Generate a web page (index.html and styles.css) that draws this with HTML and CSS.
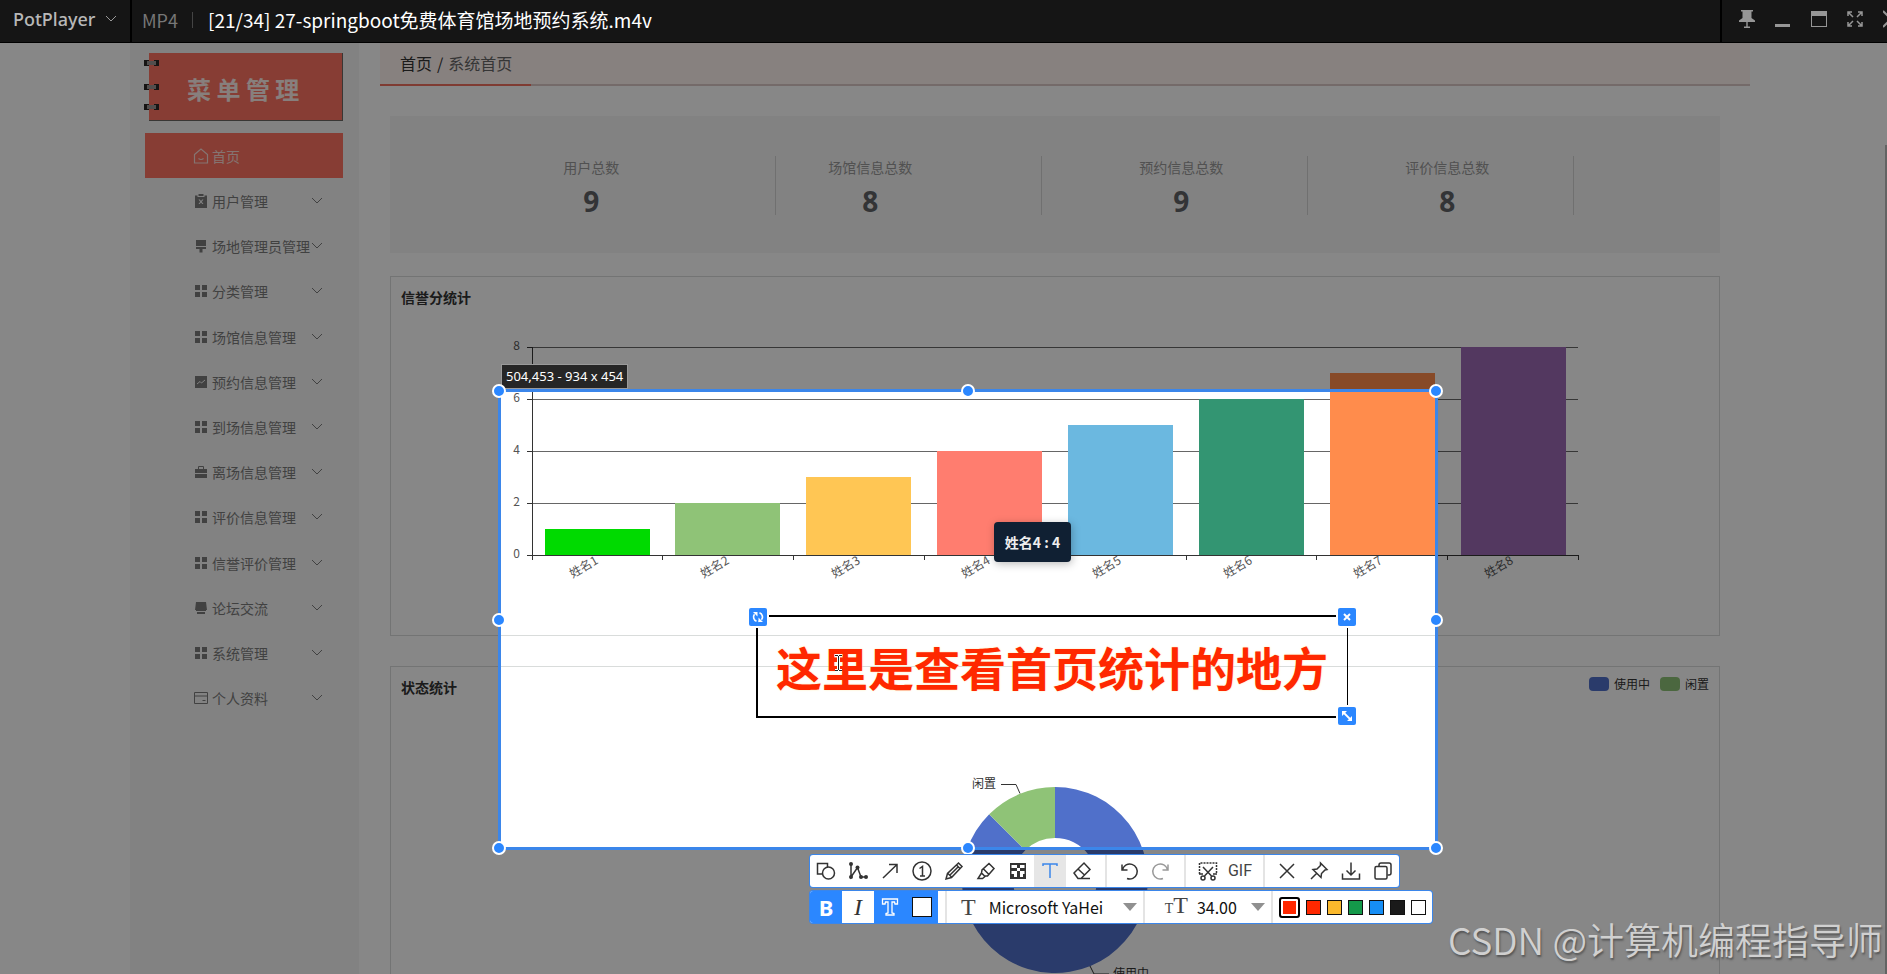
FILE: index.html
```html
<!DOCTYPE html>
<html lang="zh-CN">
<head>
<meta charset="utf-8">
<title>首页统计</title>
<link rel="stylesheet" href="styles.css">
</head>
<body>
<svg class="defs" aria-hidden="true">
  <symbol id="i-grid" viewBox="0 0 16 16"><path fill="currentColor" d="M2 2h5v5H2zM9 2h5v5H9zM2 9h5v5H2zM9 9h5v5H9z"/></symbol>
  <symbol id="i-down" viewBox="0 0 12 8"><path fill="none" stroke="currentColor" d="M1 1l5 5 5-5"/></symbol>
  <symbol id="i-home" viewBox="0 0 16 16"><path fill="none" stroke="currentColor" stroke-width="1.2" d="M1.5 6.5L8 1l6.500 5.500V15h-13zM5.500 10.500q2.500 2 5 0"/></symbol>
  <symbol id="i-user" viewBox="0 0 16 16"><path fill="currentColor" fill-rule="evenodd" d="M2 2.500h2.500V4h7V2.500H14V15H2zM5.500 6.500L7.200 8.700 5.500 11h1.300L8 9.500 9.200 11h1.300L8.800 8.700l1.700-2.200H9.200L8 7.900 6.800 6.500zM5.500 1h5v2h-5z"/></symbol>
  <symbol id="i-brush" viewBox="0 0 16 16"><path fill="currentColor" d="M3 2h10v6H3zM3 9h10v2H9.500v3.500h-3V11H3z"/></symbol>
  <symbol id="i-trend" viewBox="0 0 16 16"><path fill="currentColor" d="M2 2h12v12H2z"/><path fill="none" stroke="#f5f5f5" d="M4 10l3-2.500 1.500 1.500L12 6"/></symbol>
  <symbol id="i-case" viewBox="0 0 16 16"><path fill="currentColor" d="M2 5h12v4H2zM2 10h12v4H2z"/><path fill="none" stroke="currentColor" d="M5.500 5V2.500h5V5"/></symbol>
  <symbol id="i-forum" viewBox="0 0 16 16"><path fill="currentColor" d="M3 2h10l1 8h-1v1H3v-1H2zM4 12h8v2H4z"/></symbol>
  <symbol id="i-card" viewBox="0 0 16 16"><path fill="none" stroke="currentColor" d="M1.500 2.500h13v11h-13zM1.500 6h13M9.500 10.500h3"/></symbol>
</svg>

<div class="window">
  <header class="player">
    <button class="player-menu" type="button">PotPlayer<svg class="player-caret"><use href="#i-down"/></svg></button>
    <span class="format">MP4</span>
    <h1 class="video-title">[21/34] 27-springboot免费体育馆场地预约系统.m4v</h1>
    <div class="window-buttons">
      <button type="button" aria-label="置顶"><svg viewBox="0 0 16 18"><path fill="currentColor" d="M2 0h12v1.500h-1.500V8L16 10.500V12H8.700v4.500H11V18H5v-1.500h2.300V12H0v-1.500L3.500 8V1.500H2z"/></svg></button>
      <button type="button" aria-label="最小化"><svg viewBox="0 0 16 18"><path fill="currentColor" d="M0 14h15v3H0z"/></svg></button>
      <button type="button" aria-label="最大化"><svg viewBox="0 0 16 18"><path fill="currentColor" fill-rule="evenodd" d="M0 1h16v16H0zM1 6v10h14V6z"/></svg></button>
      <button type="button" aria-label="全屏"><svg viewBox="0 0 16 18"><path fill="none" stroke="currentColor" stroke-width="1.500" d="M1 6V2h4M11 2h4v4M15 12v4h-4M5 16H1v-4M1 2l5 5M15 2l-5 5M15 16l-5-5M1 16l5-5"/></svg></button>
      <button type="button" aria-label="关闭"><svg viewBox="0 0 16 18"><path fill="none" stroke="currentColor" stroke-width="2" d="M0 1l16 16M16 1L0 17"/></svg></button>
    </div>
  </header>

  <div class="stage">
    <aside class="sidebar">
      <div class="brand">
        <svg class="rings" viewBox="0 0 16 68"><g fill="#2b2725"><path d="M0 7h5v6H0zM10 7h5v6h-5zM0 31h5v6H0zM10 31h5v6h-5zM0 51h5v6H0zM10 51h5v6h-5z"/></g><path stroke="#9a9492" stroke-width="4" d="M3 10h9M3 34h9M3 54h9"/></svg>
        菜 单 管 理
      </div>
      <nav class="menu">
        <a class="item active" href="#"><svg><use href="#i-home"/></svg>首页</a>
        <a class="item" href="#"><svg><use href="#i-user"/></svg>用户管理<svg class="caret"><use href="#i-down"/></svg></a>
        <a class="item" href="#"><svg><use href="#i-brush"/></svg>场地管理员管理<svg class="caret"><use href="#i-down"/></svg></a>
        <a class="item" href="#"><svg><use href="#i-grid"/></svg>分类管理<svg class="caret"><use href="#i-down"/></svg></a>
        <a class="item" href="#"><svg><use href="#i-grid"/></svg>场馆信息管理<svg class="caret"><use href="#i-down"/></svg></a>
        <a class="item" href="#"><svg><use href="#i-trend"/></svg>预约信息管理<svg class="caret"><use href="#i-down"/></svg></a>
        <a class="item" href="#"><svg><use href="#i-grid"/></svg>到场信息管理<svg class="caret"><use href="#i-down"/></svg></a>
        <a class="item" href="#"><svg><use href="#i-case"/></svg>离场信息管理<svg class="caret"><use href="#i-down"/></svg></a>
        <a class="item" href="#"><svg><use href="#i-grid"/></svg>评价信息管理<svg class="caret"><use href="#i-down"/></svg></a>
        <a class="item" href="#"><svg><use href="#i-grid"/></svg>信誉评价管理<svg class="caret"><use href="#i-down"/></svg></a>
        <a class="item" href="#"><svg><use href="#i-forum"/></svg>论坛交流<svg class="caret"><use href="#i-down"/></svg></a>
        <a class="item" href="#"><svg><use href="#i-grid"/></svg>系统管理<svg class="caret"><use href="#i-down"/></svg></a>
        <a class="item" href="#"><svg><use href="#i-card"/></svg>个人资料<svg class="caret"><use href="#i-down"/></svg></a>
      </nav>
    </aside>

    <main class="main">
      <nav class="breadcrumb" aria-label="路径"><a href="#">首页</a><span>/</span><span class="here">系统首页</span></nav>
      <div class="content">
        <section class="stats">
          <div class="stat stat-users"><span>用户总数</span><strong>9</strong></div>
          <div class="stat stat-venues"><span>场馆信息总数</span><strong>8</strong></div>
          <div class="stat stat-late"><span>预约信息总数</span><strong>9</strong></div>
          <div class="stat stat-late"><span>评价信息总数</span><strong>8</strong></div>
        </section>

        <section class="panel">
          <div class="panel-head"><h2>信誉分统计</h2></div>
          <svg class="chart" viewBox="0 0 1328 326">
            <path class="gridline" d="M142 38.500h1045M142 90.500h1045M142 142.500h1045M142 194.500h1045"/>
            <rect x="154" y="220" width="105" height="26" fill="#00da00"/>
            <rect x="284" y="194" width="105" height="52" fill="#8fc377"/>
            <rect x="415" y="168" width="105" height="78" fill="#ffc654"/>
            <rect x="546" y="142" width="105" height="104" fill="#ff7d6f"/>
            <rect x="677" y="116" width="105" height="130" fill="#6bb8e0"/>
            <rect x="808" y="90" width="105" height="156" fill="#339572"/>
            <rect x="939" y="64" width="105" height="182" fill="#ff8c4c"/>
            <rect x="1070" y="38" width="105" height="208" fill="#9d6ab5"/>
            <path class="axis" d="M141.500 38v213M136 246.500h1051M136 38.500h5M136 90.500h5M136 142.500h5M136 194.500h5M271.500 246v5M402.500 246v5M533.500 246v5M664.500 246v5M795.500 246v5M925.500 246v5M1056.500 246v5M1187.500 246v5"/>
            <g class="tick-text">
              <text x="129" y="41">8</text><text x="129" y="93">6</text><text x="129" y="145">4</text><text x="129" y="197">2</text><text x="129" y="249">0</text>
              <text transform="translate(208 254) rotate(-30)">姓名1</text>
              <text transform="translate(339 254) rotate(-30)">姓名2</text>
              <text transform="translate(470 254) rotate(-30)">姓名3</text>
              <text transform="translate(600 254) rotate(-30)">姓名4</text>
              <text transform="translate(731 254) rotate(-30)">姓名5</text>
              <text transform="translate(862 254) rotate(-30)">姓名6</text>
              <text transform="translate(992 254) rotate(-30)">姓名7</text>
              <text transform="translate(1123 254) rotate(-30)">姓名8</text>
            </g>
          </svg>
        </section>

        <section class="panel">
          <div class="panel-head">
            <h2>状态统计</h2>
            <ul class="legend"><li class="busy">使用中</li><li class="idle">闲置</li></ul>
          </div>
          <svg class="chart" viewBox="0 0 1328 290">
            <path fill="#5070ca" d="M664 88A93 93 0 1 1 598.200 115.200L634.300 151.300A42 42 0 1 0 664 139z"/>
            <path fill="#8fc377" d="M598.200 115.200A93 93 0 0 1 664 88V139A42 42 0 0 0 634.300 151.300z"/>
            <path class="axis" d="M610 85.500h15l4 9M699 267l4 8h15"/>
            <text class="pie-text" x="581" y="89">闲置</text>
            <text class="pie-text" x="722" y="279">使用中</text>
          </svg>
        </section>
      </div>
    </main>
    <div class="scroll-thumb"></div>

    <div class="chart-tip">姓名4 : 4</div>

    <div class="selection">
      <span class="size-label">504,453 - 934 x 454</span>
      <i class="knob n w"></i><i class="knob n c"></i><i class="knob n e"></i>
      <i class="knob m w"></i><i class="knob m e"></i>
      <i class="knob s w"></i><i class="knob s c"></i><i class="knob s e"></i>
    </div>

    <div class="note">
      <span class="note-text">这里是查看首页统计的地方</span>
      <svg class="ibeam" viewBox="0 0 9 18"><path fill="none" stroke="#fff" stroke-width="3" d="M1 1.500h7M4.500 1v16M1 16.500h7"/><path fill="none" stroke="#222" d="M1 1.500h3M5 1.500h3M4.500 2v14M1 16.500h3M5 16.500h3"/></svg>
      <button class="note-btn tl" type="button" aria-label="旋转"><svg viewBox="0 0 18 18"><path fill="none" stroke="#fff" stroke-width="1.600" d="M7.500 13.200A4.500 4.500 0 0 1 5.500 6.200M10.500 4.800a4.500 4.500 0 0 1 2 7M9.500 13.400A4.500 4.500 0 0 0 11 13"/><path fill="#fff" d="M4 4h4.500v4.500zM14 14H9.500V9.500z"/></svg></button>
      <button class="note-btn tr" type="button" aria-label="删除"><svg viewBox="0 0 18 18"><path fill="none" stroke="#fff" stroke-width="2" d="M6 6l6 6M12 6l-6 6"/></svg></button>
      <button class="note-btn br" type="button" aria-label="缩放"><svg viewBox="0 0 18 18"><path fill="none" stroke="#fff" stroke-width="1.800" d="M5 5l8 8"/><path fill="#fff" d="M4 4h5L4 9zM14 14H9l5-5z"/></svg></button>
    </div>

    <div class="tools">
      <div class="toolbar">
        <button type="button" aria-label="形状"><svg viewBox="0 0 20 20"><path d="M7 13H1.500V2.500h10V6"/><circle cx="12.500" cy="12" r="6"/></svg></button>
        <button type="button" aria-label="折线"><svg viewBox="0 0 20 20"><path d="M3 3v13L9.500 6.500 13 16h5"/><circle class="solid" cx="3" cy="3" r="2"/><circle class="solid" cx="3" cy="16" r="2"/><circle class="solid" cx="9.500" cy="6.500" r="2"/><circle class="solid" cx="13" cy="16" r="2"/><circle class="solid" cx="18" cy="16" r="2"/></svg></button>
        <button type="button" aria-label="箭头"><svg viewBox="0 0 20 20"><path d="M3 17L17 3.500M9 3.500h8V12"/></svg></button>
        <button type="button" aria-label="序号"><svg viewBox="0 0 20 20"><circle cx="10" cy="10" r="9"/><path d="M7.500 7.500L10.500 5.500v9.500M8 15h5"/></svg></button>
        <button type="button" aria-label="铅笔"><svg viewBox="0 0 20 20"><path d="M2 18l1.500-5.500L14.500 2 18 5.500 7.500 16.500zM12.500 4l3.500 3.500M4 12.500l3.500 3.500M5.500 14.500l9-9"/></svg></button>
        <button type="button" aria-label="荧光笔"><svg viewBox="0 0 20 20"><path d="M2 17.500h4.500L9 15.500 5.500 12zM5.500 12L6 9 13 2.500 18 7.500 11.500 15H9M7.500 8l5 5"/></svg></button>
        <button type="button" aria-label="马赛克"><svg viewBox="0 0 20 20"><path class="solid" fill-rule="evenodd" d="M2 2h16v16H2zM6 4H3.500v3H6v3H3.500v3H6v3h3v-3h3v3h3v-3h1.500v-3H15V7h1.500V4H12v3H9V4zM6 7h3v3H6zM12 7h3v3h-3zM9 10h3v3H9z"/></svg></button>
        <button class="on" type="button" aria-label="文字"><svg viewBox="0 0 20 20"><path d="M3 5V3h14v2M10 3v14"/></svg></button>
        <button type="button" aria-label="橡皮擦"><svg viewBox="0 0 20 20"><path d="M2 12L12 2l6 6.500L9 17.500H6zM6 8l6.500 6M6 17.500h12"/></svg></button>
        <i class="sep"></i>
        <button type="button" aria-label="撤销"><svg viewBox="0 0 20 20"><path d="M3 3.500V9h5.500M3.500 8.500A7.500 7.500 0 1 1 8 17.500"/></svg></button>
        <button class="off" type="button" aria-label="重做"><svg viewBox="0 0 20 20"><path d="M17 3.500V9h-5.500M16.500 8.500A7.500 7.500 0 1 0 12 17.500"/></svg></button>
        <i class="sep"></i>
        <button type="button" aria-label="截图"><svg viewBox="0 0 20 20"><path stroke-dasharray="2 1" d="M1.500 13V2h17v11"/><path d="M5 6l8.500 9M15 6l-8.500 9M1 13h4M15 13h4"/><circle cx="5" cy="17" r="2"/><circle cx="15" cy="17" r="2"/></svg></button>
        <button class="gif" type="button">GIF</button>
        <i class="sep"></i>
        <button type="button" aria-label="取消"><svg viewBox="0 0 20 20"><path d="M3 3l14 14M17 3L3 17"/></svg></button>
        <button type="button" aria-label="贴图"><svg viewBox="0 0 20 20"><path d="M11.500 2L18 8.500 16 9l-3.500 3.500-.5 4-8-8 4-.5L11.500 4.500zM7.500 12.500L2 18"/></svg></button>
        <button type="button" aria-label="保存"><svg viewBox="0 0 20 20"><path d="M10 1.500V14M5.500 9.500L10 14l4.500-4.500M1.500 12.500V18h17v-5.500"/></svg></button>
        <button type="button" aria-label="复制"><svg viewBox="0 0 20 20"><path d="M6 5.500V4q0-2 2-2h8q2 0 2 2v8q0 2-2 2h-1.500"/><rect x="2" y="5.500" width="12" height="12.500" rx="1.500"/></svg></button>
      </div>

      <div class="toolbar format-bar">
        <button class="blue bold" type="button" aria-label="粗体">B</button>
        <button class="italic" type="button" aria-label="斜体">I</button>
        <button class="blue" type="button" aria-label="描边"><svg viewBox="0 0 20 20"><path class="outline-t" d="M2.500 2h15v5H15l-.5-2H12v11l2 .5V18H6v-1.500l2-.5V5H5.500L5 7H2.500z"/></svg></button>
        <button class="blue" type="button" aria-label="背景色"><span class="bg-chip"></span></button>
        <i class="sep"></i>
        <label class="field" for="font"><span class="serif-t">T</span>
          <select id="font" class="font-select"><option>Microsoft YaHei</option></select>
          <svg class="tri" viewBox="0 0 14 8"><path d="M0 0h14L7 8z"/></svg>
        </label>
        <label class="field size-field" for="size"><span class="serif-t"><small>T</small>T</span>
          <select id="size" class="size-select"><option>34.00</option></select>
          <svg class="tri" viewBox="0 0 14 8"><path d="M0 0h14L7 8z"/></svg>
        </label>
        <div class="swatches">
          <button class="swatch current red" type="button" aria-label="当前颜色"></button>
          <button class="swatch red" type="button" aria-label="红"></button>
          <button class="swatch amber" type="button" aria-label="黄"></button>
          <button class="swatch green" type="button" aria-label="绿"></button>
          <button class="swatch azure" type="button" aria-label="蓝"></button>
          <button class="swatch black" type="button" aria-label="黑"></button>
          <button class="swatch white" type="button" aria-label="白"></button>
        </div>
      </div>
    </div>

    <div class="watermark">CSDN @计算机编程指导师</div>
  </div>
</div>
</body>
</html>
```
FILE: styles.css
```css
* { box-sizing: border-box; }
body {
  margin: 0;
  background: #fff;
  color: #333;
  font-family: "Noto Sans CJK SC", "Noto Sans", sans-serif;
  font-size: 14px;
  line-height: 20px;
}
button { margin: 0; padding: 0; border: 0; background: none; color: inherit; font: inherit; }
a { color: inherit; text-decoration: none; }
h1, h2, ul { margin: 0; padding: 0; list-style: none; }
.defs { position: absolute; width: 0; height: 0; }

.window { display: flex; flex-direction: column; height: 100vh; overflow: hidden; }

/* Player title bar */
.player {
  position: relative;
  z-index: 5;
  display: flex;
  align-items: center;
  flex: none;
  height: 43px;
  padding-bottom: 3px;
  border-bottom: 1px solid #000;
  background: #151515;
  color: #777;
}
.player-menu {
  display: flex;
  align-items: center;
  gap: 10px;
  align-self: stretch;
  width: 132px;
  margin-bottom: -3px;
  padding: 0 0 4px 13px;
  border-right: 2px solid #000;
  color: #b8b8b8;
  font: 500 18px/20px "Noto Sans", sans-serif;
}
.player-caret { width: 12px; height: 8px; color: #999; }
.format { margin-left: 10px; padding-right: 14px; border-right: 1px solid #444; font-size: 18px; line-height: 16px; }
.video-title { margin-left: 15px; color: #fff; font-size: 19px; font-weight: 400; line-height: 24px; white-space: nowrap; }
.window-buttons {
  display: flex;
  align-items: center;
  align-self: stretch;
  gap: 20px;
  flex: none;
  width: 167px;
  margin: 0 0 -3px auto;
  padding: 0 0 4px 17px;
  border-left: 2px solid #000;
  color: #969696;
  overflow: hidden;
}
.window-buttons svg { display: block; width: 16px; height: 18px; }

/* Site page */
.stage { position: relative; display: flex; flex: 1; min-height: 0; overflow: hidden; }
.sidebar { flex: none; width: 229px; margin-left: 130px; padding: 10px 16px 0 15px; background: #f5f5f5; }
.brand {
  position: relative;
  height: 68px;
  margin-left: 4px;
  border-right: 1px solid #6d6965;
  border-bottom: 1px solid #6d6965;
  background: #ff7362;
  color: #fff0ec;
  font-size: 24px;
  font-weight: 700;
  line-height: 72px;
  padding-left: 38px;
}
.rings { position: absolute; left: -5px; top: 0; width: 16px; height: 68px; }
.menu { display: grid; grid-template-columns: minmax(0, 1fr); grid-auto-rows: 1fr; height: 588px; margin-top: 12px; }
.item { display: flex; align-items: center; padding: 0 20px 0 48px; color: #7c7c7c; white-space: nowrap; }
.item svg { flex: none; width: 16px; height: 16px; margin-right: 3px; }
.item .caret { width: 12px; height: 8px; margin: 0 0 0 auto; }
.item.active { background: #ff7362; color: #fbdcd6; }
.main { flex: 1; min-width: 0; margin: 0 137px 0 21px; }
.breadcrumb {
  position: relative;
  display: flex;
  gap: 5px;
  padding: 9px 20px 10px;
  border-bottom: 2px solid #dcc9c6;
  background: #fff3f0;
  font-size: 16px;
  line-height: 22px;
}
.breadcrumb .here { color: #666; }
.breadcrumb::after { content: ""; position: absolute; left: 0; bottom: -2px; width: 11%; height: 2px; background: #f0705f; }
.content { padding: 30px 30px 0 10px; }
.stats {
  display: grid;
  grid-template-columns: repeat(4, minmax(0, 1fr));
  padding: 40px 11% 38px 9%;
  background: #f5f5f5;
}
.stat { display: flex; flex-direction: column; align-items: center; height: 59px; border-right: 1px solid #d4d4d4; color: #999; }
.stat span { line-height: 22px; }
.stat strong { color: #606266; font: 700 28px/46px "Open Sans", sans-serif; }
.stat-users { padding-right: 102px; }
.stat-venues { padding-right: 76px; }
.stat-late { padding-left: 14px; }
.panel { margin-top: 23px; border: 1px solid #d9dcdb; }
.panel + .panel { margin-top: 30px; }
.panel-head { display: flex; justify-content: space-between; padding: 10px 10px 2px; }
.panel-head h2 { font-size: 14px; font-weight: 700; line-height: 20px; }
.chart { display: block; width: 100%; height: auto; }
.gridline { fill: none; stroke: #666; }
.axis { fill: none; stroke: #333; }
.tick-text { fill: #555; font-size: 12px; text-anchor: end; }
.pie-text { fill: #333; font-size: 12px; }
.legend { display: flex; gap: 10px; font-size: 12px; line-height: 14px; }
.legend li { display: flex; gap: 5px; }
.legend li::before { content: ""; width: 20px; height: 14px; border-radius: 4px; background: #5070ca; }
.legend .idle::before { background: #8fc377; }
.scroll-thumb { position: absolute; right: 0; top: 102px; bottom: 0; width: 2px; background: #bbb; }
.chart-tip {
  position: absolute;
  left: 994px;
  top: 479px;
  width: 77px;
  border-radius: 4px;
  background: #102033;
  box-shadow: 1px 2px 8px #0004;
  color: #eee;
  font-weight: 700;
  line-height: 40px;
  text-align: center;
}

/* Capture area; its spread shadow dims the page around it */
.selection {
  position: absolute;
  left: 498px;
  top: 346px;
  width: 940px;
  height: 461px;
  border: 3px solid #3b86ea;
  box-shadow: 0 0 0 2000px rgba(0, 0, 0, .47);
}
.knob { position: absolute; width: 14px; height: 14px; margin: -7px; border: 2px solid #fff; border-radius: 50%; background: #2b87ff; }
.knob.n { top: -1px; }
.knob.m { top: 50%; }
.knob.s { top: calc(100% + 1px); }
.knob.w { left: -2px; }
.knob.c { left: 50%; }
.knob.e { left: calc(100% + 1px); }
.size-label {
  position: absolute;
  left: 0;
  bottom: calc(100% + 3px);
  padding: 0 4px;
  border: 1px solid #9a9a9a;
  background: #262626;
  color: #fff;
  font: 13px/23px "Noto Sans", sans-serif;
  white-space: nowrap;
}

/* Text annotation */
.note { position: absolute; left: 756px; top: 572px; width: 592px; height: 103px; border: 2px solid #000; border-right-width: 1px; }
.note-text { display: block; padding-left: 18px; color: #ff2800; font-size: 46px; font-weight: 700; line-height: 99px; white-space: nowrap; text-shadow: 0 0 2px #ffe9a8; }
.ibeam { position: absolute; left: 76px; top: 37px; width: 9px; height: 18px; }
.note-btn { position: absolute; width: 18px; height: 18px; border-radius: 2px; background: #2b87ff; box-shadow: 0 0 0 2px #fff; }
.note-btn svg { display: block; }
.note-btn.tl { left: -9px; top: -9px; }
.note-btn.tr { right: -9px; top: -9px; }
.note-btn.br { right: -9px; bottom: -9px; }

/* Capture tools */
.tools { position: absolute; left: 810px; top: 812px; display: flex; flex-direction: column; align-items: flex-start; gap: 4px; }
.toolbar { display: flex; height: 32px; border-radius: 3px; background: #fff; box-shadow: 0 0 0 1px #3b86ea; color: #333; }
.toolbar > button { display: grid; place-items: center; width: 32px; height: 32px; }
.toolbar > button svg { width: 20px; height: 20px; fill: none; stroke: currentColor; stroke-width: 1.5; }
.toolbar .solid { fill: currentColor; stroke: none; }
.toolbar > .on { background: #e6e6e6; color: #3b86ea; }
.toolbar > .off { color: #999; }
.toolbar > .gif { font: 16px/32px Roboto, sans-serif; color: #444; }
.sep { width: 15px; background: linear-gradient(#e4e4e4, #e4e4e4) center / 2px 100% no-repeat; }
.toolbar > .blue { background: #2b87ff; color: #fff; }
.toolbar > .bold { font: 700 22px/32px "Noto Sans", sans-serif; border-radius: 3px 0 0 3px; }
.toolbar > .italic { font: italic 24px/32px "Liberation Serif", serif; }
.toolbar .outline-t { stroke-width: 1.3; }
.bg-chip { width: 20px; height: 20px; border: 1px solid #111; background: #fff; }
.field { display: flex; align-items: center; padding: 0 6px 0 8px; border-right: 2px solid #e4e4e4; }
.size-field { padding-left: 20px; }
.serif-t { font: 24px/32px "Liberation Serif", serif; color: #444; }
.serif-t small { font-size: 14px; }
.field select { height: 30px; padding: 0; border: 0; background: none; color: #111; font: 16px/30px "Noto Sans CJK SC", sans-serif; appearance: none; }
.font-select { width: 134px; margin-left: 13px; }
.size-select { width: 54px; margin-left: 9px; }
.tri { width: 14px; height: 8px; fill: #909090; }
.swatches { display: flex; align-items: center; gap: 6px; padding: 0 6px; }
.swatch { width: 15px; height: 15px; border: 1px solid #111; }
.swatch.current { width: 21px; height: 21px; border: 2px solid #000; border-radius: 3px; box-shadow: inset 0 0 0 2px #fff; }
.red { background: #ff2800; }
.amber { background: #fbb92c; }
.green { background: #14994a; }
.azure { background: #168ef5; }
.black { background: #1a1a1a; }
.white { background: #fff; }

.watermark {
  position: absolute;
  right: 4px;
  bottom: 8px;
  color: #d0d0d0;
  font-size: 37px;
  font-weight: 350;
  line-height: 54px;
  text-shadow: 1px 2px 2px #555;
  white-space: nowrap;
}
```
